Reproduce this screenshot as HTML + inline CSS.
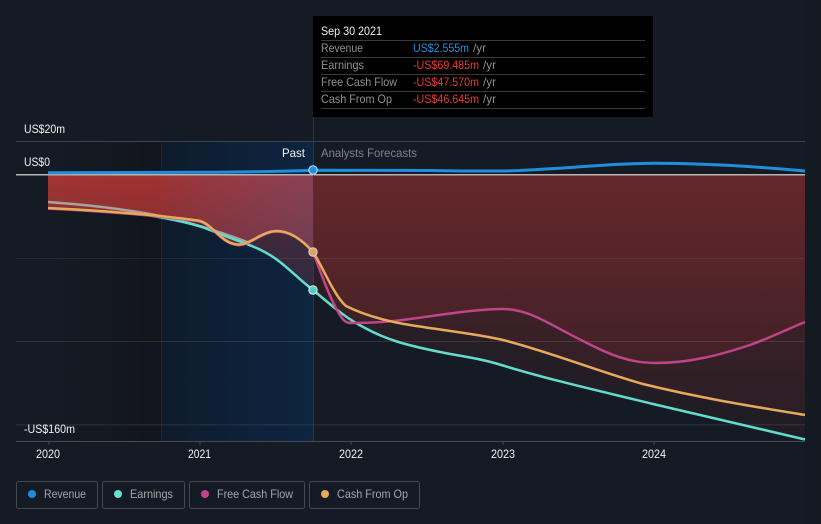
<!DOCTYPE html>
<html>
<head>
<meta charset="utf-8">
<style>
html,body{margin:0;padding:0;background:#151b24;}
svg{display:block;}
text{font-family:"Liberation Sans",sans-serif;font-size:12px;}
</style>
</head>
<body>
<svg width="821" height="524" viewBox="0 0 821 524" xmlns="http://www.w3.org/2000/svg">
<defs>
<linearGradient id="dk" x1="0" x2="1" y1="0" y2="0"><stop offset="0" stop-color="#151b24"/><stop offset="1" stop-color="#12151b"/></linearGradient>
<linearGradient id="bl" x1="0" x2="1" y1="0" y2="0"><stop offset="0" stop-color="#0e1b2b"/><stop offset="1" stop-color="#0d2540"/></linearGradient>
<linearGradient id="ov" x1="0" x2="1" y1="0" y2="0"><stop offset="0" stop-color="#46629a" stop-opacity="0"/><stop offset="1" stop-color="#46629a" stop-opacity=".24"/></linearGradient>
<linearGradient id="rf" gradientUnits="userSpaceOnUse" x1="0" x2="0" y1="175" y2="560"><stop offset="0" stop-color="#e53935" stop-opacity=".15"/><stop offset="1" stop-color="#e53935" stop-opacity="0"/></linearGradient>
<linearGradient id="rp" gradientUnits="userSpaceOnUse" x1="0" x2="0" y1="175" y2="300"><stop offset="0" stop-color="#e5403c" stop-opacity=".31"/><stop offset="1" stop-color="#e5403c" stop-opacity=".15"/></linearGradient>
<clipPath id="past"><rect x="48" y="140" width="265" height="310"/></clipPath>
<clipPath id="fore"><rect x="313" y="140" width="492" height="310"/></clipPath>
<clipPath id="areaclip"><path d="M48 175L48 208C90 210 130 213 160 216C175 218 190 219 200 221C212 224 222 244 238 244.5C250 245 262 231 277 231C292 231 305 243 313 252L313 175Z"/></clipPath>
<path id="ft" d="M48 175L48 206C100 208 140 213 165 218C190 223 205 228 225 236C250 245 265 250 280 262C295 274 300 280 313 290C330 304 345 318 365 328C385 339 405 345 440 352C465 357 478 358 498 364C550 380 600 391 653 404C710 417 760 429 805 439.5L805 175Z"/>
<path id="fm" d="M48 175L48 208C90 210 130 213 160 216C175 218 190 219 200 221C212 224 222 244 238 244.5C250 245 262 231 277 231C292 231 305 243 313 252C320 270 330 300 340 315C344 322 347 323 352 323C372 323 390 322 410 319C440 315 475 309 503 309C530 309 550 325 583 341C610 355 630 363 655 363C690 363 720 355 750 345C770 338 790 328 805 322L805 175Z"/>
<path id="fo" d="M48 175L48 208C90 210 130 213 160 216C175 218 190 219 200 221C212 224 222 244 238 244.5C250 245 262 231 277 231C292 231 305 243 313 252C322 265 334 296 346 306C362 314 385 321 410 325C440 330 478 334 503 340C550 352 600 372 643 384C700 398 750 406 805 415L805 175Z"/>
</defs>

<rect width="821" height="524" fill="#151b24"/>
<rect x="805" y="0" width="16" height="524" fill="#131a22"/>
<rect x="48" y="142" width="113" height="299" fill="url(#dk)"/>

<!-- past band -->
<rect x="161" y="142" width="152" height="299" fill="url(#bl)"/>
<rect x="161" y="142" width="1" height="299" fill="#1e2c42" opacity=".6"/>

<!-- red fills -->
<g clip-path="url(#fore)" fill="url(#rf)">
<use href="#ft"/><use href="#fm"/><use href="#fo"/>
</g>
<g clip-path="url(#past)" fill="url(#rp)">
<use href="#ft"/><use href="#fm"/><use href="#fo"/>
</g>
<g clip-path="url(#areaclip)"><rect x="161" y="175" width="152" height="80" fill="url(#ov)"/></g>

<!-- grid -->
<rect x="16" y="141" width="789" height="1" fill="#3e434e"/>
<rect x="16" y="258" width="789" height="1" fill="#ffffff" opacity=".07"/>
<rect x="16" y="341" width="789" height="1" fill="#ffffff" opacity=".11"/>
<rect x="16" y="424" width="789" height="1.5" fill="#ffffff" opacity=".07"/>
<rect x="16" y="441" width="789" height="1" fill="#454a55"/>
<rect x="16" y="174" width="789" height="1.5" fill="#b9b5b5"/>
<path d="M49 441v4M200 441v4M351 441v4M503 441v4M654 441v4" stroke="#454a55" stroke-width="1" fill="none"/>
<rect x="313" y="117" width="1" height="324" fill="#23406a" opacity=".8"/>

<!-- lines -->
<g fill="none" stroke-width="2.5" stroke-linecap="butt">
<path d="M48 202C90 205 130 210 160 216C185 221 215 230 250 243" stroke="#a8a39f"/>
<path d="M150 215.5C165 218 190 223 205 228C212 231 218 233 225 236C250 245 265 250 280 262C295 274 300 280 313 290C330 304 345 318 365 328C385 339 405 345 440 352C465 357 478 358 498 364C550 380 600 391 653 404C710 417 760 429 805 439.5" stroke="#62dccd"/>
<path d="M48 208.6C90 210.6 130 213.6 160 216.6C175 218.6 190 219.6 200 221.6C212 224.6 222 244.6 238 245.1C250 245.6 262 231.6 277 231.6C292 231.6 305 243 313 252C320 270 330 300 340 315C344 322 347 323 352 323C372 323 390 322 410 319C440 315 475 309 503 309C530 309 550 325 583 341C610 355 630 363 655 363C690 363 720 355 750 345C770 338 790 328 805 322" stroke="#bf4488"/>
<path d="M48 208C90 210 130 213 160 216C175 218 190 219 200 221C212 224 222 244 238 244.5C250 245 262 231 277 231C292 231 305 243 313 252C322 265 334 296 346 306C362 314 385 321 410 325C440 330 478 334 503 340C550 352 600 372 643 384C700 398 750 406 805 415" stroke="#e6aa5a"/>
<path d="M48 172.8L200 172.3C240 172 270 172 313 170.3L430 170.5C470 171 495 171.5 513 170.7C570 168.5 610 163.3 655 163.3C710 163.3 760 167 805 171" stroke="#1f8fdd" stroke-width="3"/>
</g>

<!-- markers -->
<circle cx="313" cy="170" r="4.2" fill="#1f8fdd" stroke="#cfe6f5" stroke-width="1"/>
<circle cx="313" cy="252" r="4.2" fill="#dba65f" stroke="#d8cfe0" stroke-width="1"/>
<circle cx="313" cy="290" r="4.2" fill="#55ccc8" stroke="#d5f1ef" stroke-width="1"/>

<!-- tooltip -->
<rect x="313" y="16" width="340" height="101" fill="#000"/>
<path d="M321 40.5H645M321 57.5H645M321 74.5H645M321 91.5H645M321 108.5H645" stroke="#3a3a3a" stroke-width="1" fill="none"/>
<text x="321" y="35" fill="#f2f2f2" textLength="61" lengthAdjust="spacingAndGlyphs">Sep 30 2021</text>
<text x="321" y="52" fill="#8f8f8f" textLength="42" lengthAdjust="spacingAndGlyphs">Revenue</text>
<text x="321" y="69" fill="#8f8f8f" textLength="43" lengthAdjust="spacingAndGlyphs">Earnings</text>
<text x="321" y="86" fill="#8f8f8f" textLength="76" lengthAdjust="spacingAndGlyphs">Free Cash Flow</text>
<text x="321" y="103" fill="#8f8f8f" textLength="71" lengthAdjust="spacingAndGlyphs">Cash From Op</text>
<text x="413" y="52" fill="#2390dc" textLength="56" lengthAdjust="spacingAndGlyphs">US$2.555m</text>
<text x="473" y="52" fill="#8f8f8f" textLength="13" lengthAdjust="spacingAndGlyphs">/yr</text>
<text x="413" y="69" fill="#e53935" textLength="66" lengthAdjust="spacingAndGlyphs">-US$69.485m</text>
<text x="483" y="69" fill="#8f8f8f" textLength="13" lengthAdjust="spacingAndGlyphs">/yr</text>
<text x="413" y="86" fill="#e53935" textLength="66" lengthAdjust="spacingAndGlyphs">-US$47.570m</text>
<text x="483" y="86" fill="#8f8f8f" textLength="13" lengthAdjust="spacingAndGlyphs">/yr</text>
<text x="413" y="103" fill="#e53935" textLength="66" lengthAdjust="spacingAndGlyphs">-US$46.645m</text>
<text x="483" y="103" fill="#8f8f8f" textLength="13" lengthAdjust="spacingAndGlyphs">/yr</text>

<!-- axis labels -->
<text x="24" y="133" fill="#f0f0f0" textLength="41" lengthAdjust="spacingAndGlyphs">US$20m</text>
<text x="24" y="166" fill="#f0f0f0" textLength="26" lengthAdjust="spacingAndGlyphs">US$0</text>
<text x="24" y="433" fill="#f0f0f0" textLength="51" lengthAdjust="spacingAndGlyphs">-US$160m</text>
<text x="282" y="157" fill="#f0f0f0" textLength="23" lengthAdjust="spacingAndGlyphs">Past</text>
<text x="321" y="157" fill="#80838a" textLength="96" lengthAdjust="spacingAndGlyphs">Analysts Forecasts</text>
<text x="36" y="458" fill="#f0f0f0" textLength="24" lengthAdjust="spacingAndGlyphs">2020</text>
<text x="188" y="458" fill="#f0f0f0" textLength="23" lengthAdjust="spacingAndGlyphs">2021</text>
<text x="339" y="458" fill="#f0f0f0" textLength="24" lengthAdjust="spacingAndGlyphs">2022</text>
<text x="491" y="458" fill="#f0f0f0" textLength="24" lengthAdjust="spacingAndGlyphs">2023</text>
<text x="642" y="458" fill="#f0f0f0" textLength="24" lengthAdjust="spacingAndGlyphs">2024</text>

<!-- legend -->
<g fill="none" stroke="#434852" stroke-width="1">
<rect x="16.5" y="481.5" width="81" height="27" rx="2"/>
<rect x="102.5" y="481.5" width="82" height="27" rx="2"/>
<rect x="189.5" y="481.5" width="115" height="27" rx="2"/>
<rect x="309.5" y="481.5" width="110" height="27" rx="2"/>
</g>
<circle cx="32" cy="494" r="4" fill="#1f8fdd"/>
<circle cx="118" cy="494" r="4" fill="#65e2d0"/>
<circle cx="205" cy="494" r="4" fill="#bf4488"/>
<circle cx="325" cy="494" r="4" fill="#e6aa5a"/>
<text x="44" y="498" fill="#a3a6ab" textLength="42" lengthAdjust="spacingAndGlyphs">Revenue</text>
<text x="130" y="498" fill="#a3a6ab" textLength="43" lengthAdjust="spacingAndGlyphs">Earnings</text>
<text x="217" y="498" fill="#a3a6ab" textLength="76" lengthAdjust="spacingAndGlyphs">Free Cash Flow</text>
<text x="337" y="498" fill="#a3a6ab" textLength="71" lengthAdjust="spacingAndGlyphs">Cash From Op</text>
</svg>
</body>
</html>
